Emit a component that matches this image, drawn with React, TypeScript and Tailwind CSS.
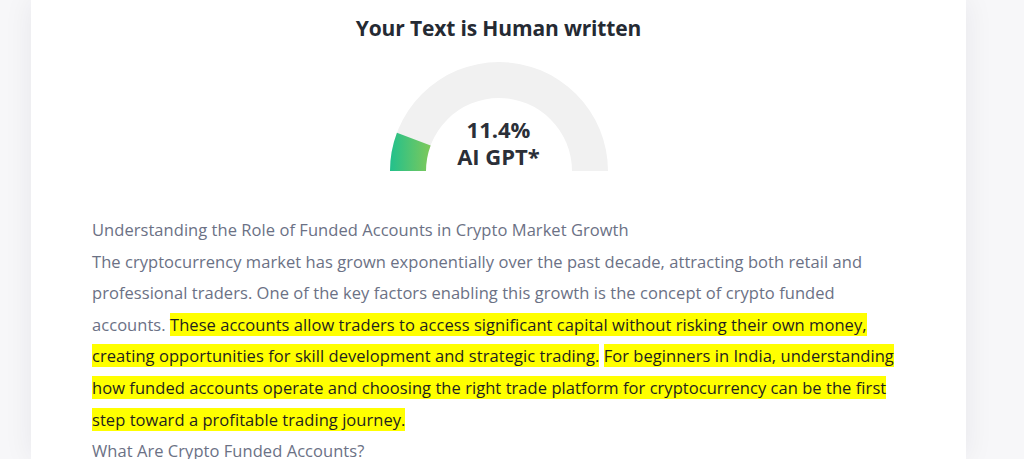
import React from 'react'

const GAUGE_VALUE = 11.4

function arcPath(cx: number, cy: number, rOuter: number, rInner: number, fromDeg: number, toDeg: number) {
  const p = (r: number, deg: number) => {
    const a = (deg * Math.PI) / 180
    return [cx + r * Math.cos(a), cy - r * Math.sin(a)]
  }
  const [x1, y1] = p(rOuter, fromDeg)
  const [x2, y2] = p(rOuter, toDeg)
  const [x3, y3] = p(rInner, toDeg)
  const [x4, y4] = p(rInner, fromDeg)
  const large = Math.abs(fromDeg - toDeg) > 180 ? 1 : 0
  return `M${x1} ${y1} A${rOuter} ${rOuter} 0 ${large} 1 ${x2} ${y2} L${x3} ${y3} A${rInner} ${rInner} 0 ${large} 0 ${x4} ${y4} Z`
}

function Gauge({ value }: { value: number }) {
  const end = 180 - (value / 100) * 180
  return (
    <div className="relative w-[218px] h-[109px]">
      <svg width="218" height="109" viewBox="0 0 218 109">
        <defs>
          <linearGradient id="g" x1="0" x2="1" y1="0" y2="0">
            <stop offset="0%" stopColor="#22c08c" />
            <stop offset="100%" stopColor="#7ec95a" />
          </linearGradient>
        </defs>
        <path d={arcPath(109, 109, 109, 73, 180, 0)} fill="#f1f1f1" />
        <path d={arcPath(109, 109, 109, 73, 180, end)} fill="url(#g)" />
      </svg>
      <div className="absolute inset-x-0 top-[54px] flex flex-col items-center gap-[1px] text-[22px] font-bold leading-[26px] text-[#2b2f38]">
        <span>{value}%</span>
        <span>AI GPT*</span>
      </div>
    </div>
  )
}

const hl = 'bg-[#ffff00] text-[#1f1f1f]'

export default function App() {
  return (
    <div
      className="min-h-screen bg-[#f7f7f9] px-[31px] overflow-hidden"
      style={{ fontFamily: '"Open Sans", "Noto Sans", sans-serif' }}
    >
      <div className="bg-white w-[935px] h-[459px] shadow-[0_0_28px_rgba(20,20,60,0.07)] flex flex-col items-center">
        <h1 className="mt-[13px] text-[21px] font-bold leading-[30px] tracking-[-0.15px] text-[#252a33]">
          Your Text is Human written
        </h1>
        <div className="mt-[19px]">
          <Gauge value={GAUGE_VALUE} />
        </div>
        <div className="self-stretch pl-[61px] mt-[43px] text-[16.5px] leading-[31.6px] tracking-[0.05px] text-[#6b7185] whitespace-nowrap">
          <p>Understanding the Role of Funded Accounts in Crypto Market Growth</p>
          <p>
            The cryptocurrency market has grown exponentially over the past decade, attracting both retail and
            <br />
            professional traders. One of the key factors enabling this growth is the concept of crypto funded
            <br />
            accounts.{' '}
            <span className={hl}>
              These accounts allow traders to access significant capital without risking their own money,{' '}
              <br />
              creating opportunities for skill development and strategic trading.
            </span>{' '}
            <span className={hl}>
              For beginners in India, understanding{' '}
              <br />
              how funded accounts operate and choosing the right trade platform for cryptocurrency can be the first{' '}
              <br />
              step toward a profitable trading journey.
            </span>
          </p>
          <p>What Are Crypto Funded Accounts?</p>
        </div>
      </div>
    </div>
  )
}
